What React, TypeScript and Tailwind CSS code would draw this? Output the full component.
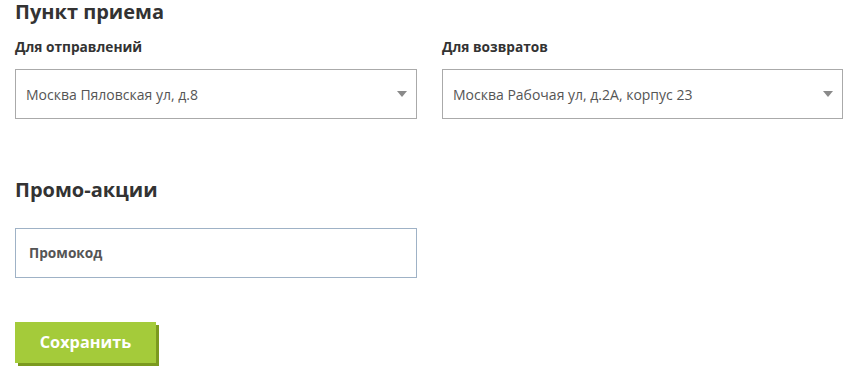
import React from "react";

function Caret() {
  return (
    <svg width="10" height="6" viewBox="0 0 10 6" className="shrink-0">
      <path d="M0 0 L10 0 L5 6 Z" fill="#8a8a8a" />
    </svg>
  );
}

function SelectBox({ label, value }: { label: string; value: string }) {
  return (
    <div className="flex flex-col">
      <div className="text-[13.7px] font-bold leading-[18px] text-[#333] mt-[14px] mb-[13px]">{label}</div>
      <div className="h-[50px] border border-[#aaaaaa] bg-white flex items-center justify-between pl-[10px] pr-[9px]">
        <span className="text-[14px] text-[#555]">{value}</span>
        <Caret />
      </div>
    </div>
  );
}

export default function App() {
  return (
    <div className="bg-white w-[854px] h-[373px] pl-[15px]" style={{ fontFamily: '"Open Sans", sans-serif' }}>
      <h2 className="text-[20px] font-bold leading-[24px] text-[#333]">Пункт приема</h2>
      <div className="grid grid-cols-[402px_401px] gap-x-[25px]">
        <SelectBox label="Для отправлений" value="Москва Пяловская ул, д.8" />
        <SelectBox label="Для возвратов" value="Москва Рабочая ул, д.2А, корпус 23" />
      </div>
      <h2 className="text-[20px] font-bold leading-[24px] text-[#333] mt-[59px]">Промо-акции</h2>
      <div className="w-[402px] h-[50px] mt-[26px] border border-[#9fb2c6] flex items-center pl-[13px]">
        <span className="text-[13.7px] font-bold text-[#555]">Промокод</span>
      </div>
      <button className="mt-[44px] w-[141px] h-[41px] bg-[#a4cb3a] text-white text-[16.3px] font-bold shadow-[3px_3px_0_#7b9a1f]">
        Сохранить
      </button>
    </div>
  );
}
